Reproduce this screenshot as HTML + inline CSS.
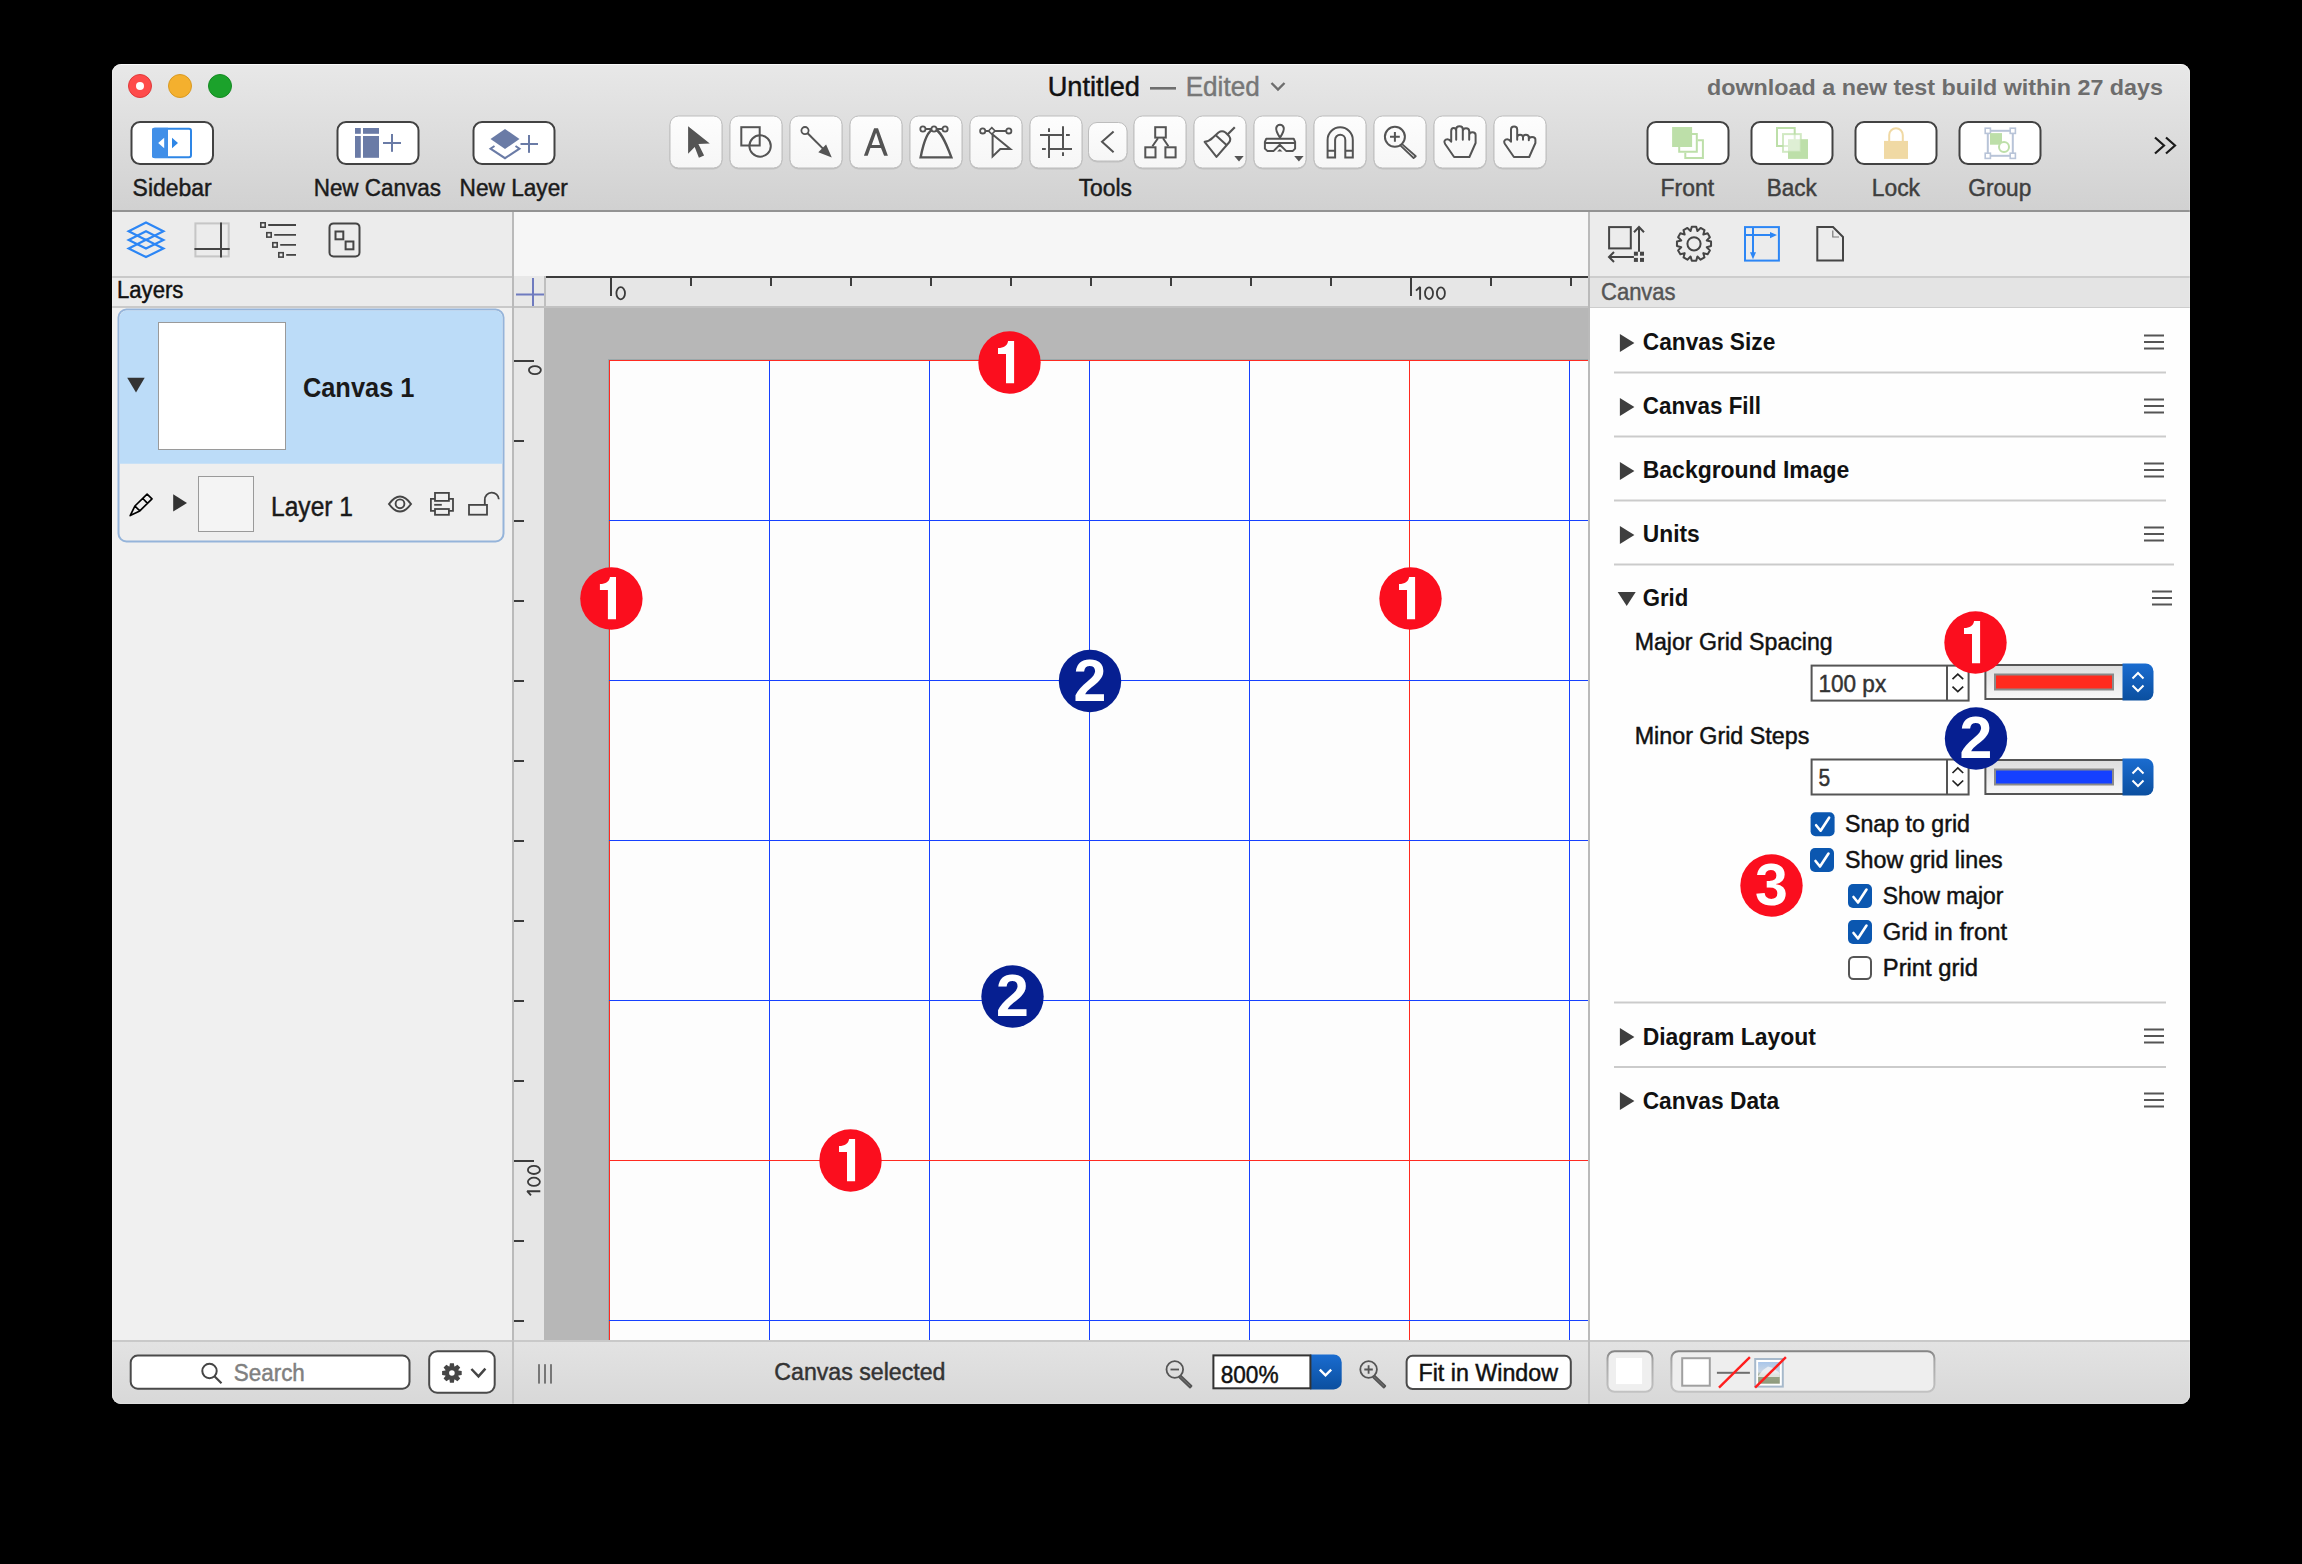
<!DOCTYPE html>
<html><head><meta charset="utf-8"><title>OmniGraffle Grid</title>
<style>html,body{margin:0;padding:0;background:#000;width:2302px;height:1564px;overflow:hidden}</style>
</head><body>
<svg width="2302" height="1564" viewBox="0 0 2302 1564" font-family='"Liberation Sans", sans-serif' style="display:block"><defs>
<linearGradient id="tb" x1="0" y1="0" x2="0" y2="1"><stop offset="0" stop-color="#e8e8e8"/><stop offset="1" stop-color="#d1d1d1"/></linearGradient>
<linearGradient id="bb" x1="0" y1="0" x2="0" y2="1"><stop offset="0" stop-color="#e3e3e3"/><stop offset="1" stop-color="#d8d8d8"/></linearGradient>
<linearGradient id="toolbtn" x1="0" y1="0" x2="0" y2="1"><stop offset="0" stop-color="#fdfdfd"/><stop offset="1" stop-color="#f6f6f6"/></linearGradient>
<linearGradient id="bluebtn" x1="0" y1="0" x2="0" y2="1"><stop offset="0" stop-color="#1a6cd0"/><stop offset="1" stop-color="#0b4f9f"/></linearGradient>
<linearGradient id="well" x1="0" y1="0" x2="0" y2="1"><stop offset="0" stop-color="#dedede"/><stop offset="1" stop-color="#f8f8f8"/></linearGradient>
<clipPath id="wclip"><rect x="112" y="64" width="2078" height="1340" rx="9" ry="9"/></clipPath>
<clipPath id="cclip"><rect x="544" y="308" width="1044" height="1032"/></clipPath>
<linearGradient id="wellStroke" x1="0" y1="0" x2="0" y2="1"><stop offset="0" stop-color="#858585"/><stop offset="0.25" stop-color="#a8a8a8"/><stop offset="1" stop-color="#c2c2c2"/></linearGradient>
<linearGradient id="photo" x1="0" y1="0" x2="0" y2="1"><stop offset="0" stop-color="#a9c6ea"/><stop offset="0.45" stop-color="#c9d6e4"/><stop offset="0.6" stop-color="#9aa58a"/><stop offset="1" stop-color="#8e9a7c"/></linearGradient>
</defs>
<rect x="0" y="0" width="2302" height="1564" fill="#000" />
<g clip-path="url(#wclip)">
<rect x="112" y="64" width="2078" height="1340" fill="#ececec" />
<rect x="112" y="64" width="2078" height="146" fill="url(#tb)" />
<rect x="112" y="210" width="2078" height="2" fill="#939393" />
<circle cx="140" cy="86" r="11.5" fill="#fe4b4b" stroke="#e0393a" stroke-width="1"/>
<circle cx="140" cy="86" r="4" fill="#fff"/>
<circle cx="180" cy="86" r="11.5" fill="#f4b02e" stroke="#d99a22" stroke-width="1"/>
<circle cx="220" cy="86" r="11.5" fill="#1ba22b" stroke="#148a22" stroke-width="1"/>
<text x="1047.7" y="96" font-size="27" font-weight="400" fill="#111" stroke="#111" stroke-width="0.45" textLength="92.3" lengthAdjust="spacingAndGlyphs" >Untitled</text>
<rect x="1150" y="87" width="26" height="2.6" fill="#6e6e6e" />
<text x="1185.7" y="96" font-size="27" font-weight="400" fill="#777" stroke="#777" stroke-width="0.45" textLength="74" lengthAdjust="spacingAndGlyphs" >Edited</text>
<polyline points="1271.5,83 1278,89.5 1284.5,83" fill="none" stroke="#6e6e6e" stroke-width="2.4"/>
<text x="1707" y="95.2" font-size="22" font-weight="700" fill="#6d6d6d" textLength="456" lengthAdjust="spacingAndGlyphs" >download a new test build within 27 days</text>
<rect x="131.5" y="122" width="81.5" height="42" rx="8.5" ry="8.5" fill="#fff" stroke="#424242" stroke-width="2"/>
<rect x="337.5" y="122" width="81.0" height="42" rx="8.5" ry="8.5" fill="#fff" stroke="#424242" stroke-width="2"/>
<rect x="473.5" y="122" width="81.0" height="42" rx="8.5" ry="8.5" fill="#fff" stroke="#424242" stroke-width="2"/>
<rect x="1647.5" y="122" width="81.0" height="42" rx="8.5" ry="8.5" fill="#fff" stroke="#424242" stroke-width="2"/>
<rect x="1751.5" y="122" width="81.0" height="42" rx="8.5" ry="8.5" fill="#fff" stroke="#424242" stroke-width="2"/>
<rect x="1855.5" y="122" width="81.0" height="42" rx="8.5" ry="8.5" fill="#fff" stroke="#424242" stroke-width="2"/>
<rect x="1959.5" y="122" width="81.0" height="42" rx="8.5" ry="8.5" fill="#fff" stroke="#424242" stroke-width="2"/>
<rect x="153" y="128.8" width="38" height="28.4" rx="2" fill="#fff" stroke="#2e86e6" stroke-width="2"/>
<path d="M152,129.8 a2,2 0 0 1 2,-2 h14 v30.2 h-14 a2,2 0 0 1 -2,-2 z" fill="#418fe8"/>
<polygon points="164.2,137.8 164.2,148.2 158.2,143" fill="#fff"/>
<polygon points="172,137.8 172,148.2 178,143" fill="#2e86e6"/>
<rect x="355" y="128" width="5.8" height="5.8" fill="#6a7ba6" />
<rect x="363" y="128" width="16" height="5.8" fill="#6a7ba6" />
<rect x="355" y="136" width="5.8" height="21.8" fill="#6a7ba6" />
<rect x="363" y="136" width="16" height="21.8" fill="#6a7ba6" />
<rect x="383" y="142" width="18" height="2" fill="#6a7ba6" />
<rect x="391" y="134" width="2" height="17.8" fill="#6a7ba6" />
<polygon points="505,129 519.5,139 505,149 490.5,139" fill="#6a7ba6"/>
<polyline points="494.5,146 490.5,148.7 505,158.2 519.5,148.7 515.5,146" fill="none" stroke="#6a7ba6" stroke-width="2"/>
<rect x="520.5" y="143" width="17.5" height="2" fill="#6a7ba6" />
<rect x="528" y="135" width="2" height="17.8" fill="#6a7ba6" />
<text x="132.6" y="196" font-size="23" font-weight="400" fill="#1b1b1b" stroke="#1b1b1b" stroke-width="0.45" textLength="79" lengthAdjust="spacingAndGlyphs" >Sidebar</text>
<text x="313.7" y="196" font-size="23" font-weight="400" fill="#1b1b1b" stroke="#1b1b1b" stroke-width="0.45" textLength="127.2" lengthAdjust="spacingAndGlyphs" >New Canvas</text>
<text x="459.6" y="196" font-size="23" font-weight="400" fill="#1b1b1b" stroke="#1b1b1b" stroke-width="0.45" textLength="108.2" lengthAdjust="spacingAndGlyphs" >New Layer</text>
<text x="1078.7" y="196" font-size="23" font-weight="400" fill="#1b1b1b" stroke="#1b1b1b" stroke-width="0.45" textLength="53.3" lengthAdjust="spacingAndGlyphs" >Tools</text>
<text x="1660.5" y="196" font-size="23" font-weight="400" fill="#3f3f3f" stroke="#3f3f3f" stroke-width="0.45" textLength="53.5" lengthAdjust="spacingAndGlyphs" >Front</text>
<text x="1766.8" y="196" font-size="23" font-weight="400" fill="#3f3f3f" stroke="#3f3f3f" stroke-width="0.45" textLength="50" lengthAdjust="spacingAndGlyphs" >Back</text>
<text x="1871.8" y="196" font-size="23" font-weight="400" fill="#3f3f3f" stroke="#3f3f3f" stroke-width="0.45" textLength="48.2" lengthAdjust="spacingAndGlyphs" >Lock</text>
<text x="1968.3" y="196" font-size="23" font-weight="400" fill="#3f3f3f" stroke="#3f3f3f" stroke-width="0.45" textLength="63" lengthAdjust="spacingAndGlyphs" >Group</text>
<polyline points="2155,137.5 2164,145.5 2155,153.5" fill="none" stroke="#1b1b1b" stroke-width="2.2"/>
<polyline points="2166,137.5 2175,145.5 2166,153.5" fill="none" stroke="#1b1b1b" stroke-width="2.2"/>
<rect x="1672.1" y="127" width="20" height="20" fill="#bddfa9" />
<path d="M1692,134.1 h4.8 v17.7 h-17.6 v-4.8" fill="none" stroke="#bddfa9" stroke-width="2"/>
<path d="M1697.8,140.2 h5.1 v17.7 h-17.6 v-5.1" fill="none" stroke="#bddfa9" stroke-width="2"/>
<rect x="1788" y="139.2" width="20" height="19.7" fill="#bddfa9"/>
<rect x="1777" y="128" width="17.7" height="18" fill="none" stroke="#bddfa9" stroke-width="2"/>
<rect x="1783" y="134.1" width="17.8" height="17.7" fill="#fff" fill-opacity="0.5" stroke="#bddfa9" stroke-opacity="0.7" stroke-width="2"/>
<rect x="1884" y="140.9" width="24" height="18" fill="#f0d9a4"/>
<path d="M1889.2,141 v-6 a6.8,6.8 0 0 1 13.6,0 v6" fill="none" stroke="#f0d9a4" stroke-width="2"/>
<rect x="1987.8" y="130.8" width="25" height="25" fill="none" stroke="#b8c4d8" stroke-width="2"/>
<rect x="1985.2" y="128.20000000000002" width="5.2" height="5.2" fill="#fff" stroke="#b8c4d8" stroke-width="1.6"/>
<rect x="2010.2" y="128.20000000000002" width="5.2" height="5.2" fill="#fff" stroke="#b8c4d8" stroke-width="1.6"/>
<rect x="1985.2" y="153.20000000000002" width="5.2" height="5.2" fill="#fff" stroke="#b8c4d8" stroke-width="1.6"/>
<rect x="2010.2" y="153.20000000000002" width="5.2" height="5.2" fill="#fff" stroke="#b8c4d8" stroke-width="1.6"/>
<rect x="1990" y="133.1" width="12" height="11.6" fill="#bddfa9" />
<circle cx="2004" cy="147" r="5" fill="#fff" stroke="#bddfa9" stroke-width="2"/>
<rect x="669.5" y="116.5" width="53.0" height="53.0" rx="9" ry="9" fill="#b5b5b5" opacity="0.6"/>
<rect x="670.0" y="116.0" width="52.0" height="52.0" rx="8.5" ry="8.5" fill="url(#toolbtn)" stroke="#bdbdbd" stroke-width="1"/>
<rect x="729.5" y="116.5" width="53.0" height="53.0" rx="9" ry="9" fill="#b5b5b5" opacity="0.6"/>
<rect x="730.0" y="116.0" width="52.0" height="52.0" rx="8.5" ry="8.5" fill="url(#toolbtn)" stroke="#bdbdbd" stroke-width="1"/>
<rect x="789.5" y="116.5" width="53.0" height="53.0" rx="9" ry="9" fill="#b5b5b5" opacity="0.6"/>
<rect x="790.0" y="116.0" width="52.0" height="52.0" rx="8.5" ry="8.5" fill="url(#toolbtn)" stroke="#bdbdbd" stroke-width="1"/>
<rect x="849.5" y="116.5" width="53.0" height="53.0" rx="9" ry="9" fill="#b5b5b5" opacity="0.6"/>
<rect x="850.0" y="116.0" width="52.0" height="52.0" rx="8.5" ry="8.5" fill="url(#toolbtn)" stroke="#bdbdbd" stroke-width="1"/>
<rect x="909.5" y="116.5" width="53.0" height="53.0" rx="9" ry="9" fill="#b5b5b5" opacity="0.6"/>
<rect x="910.0" y="116.0" width="52.0" height="52.0" rx="8.5" ry="8.5" fill="url(#toolbtn)" stroke="#bdbdbd" stroke-width="1"/>
<rect x="969.5" y="116.5" width="53.0" height="53.0" rx="9" ry="9" fill="#b5b5b5" opacity="0.6"/>
<rect x="970.0" y="116.0" width="52.0" height="52.0" rx="8.5" ry="8.5" fill="url(#toolbtn)" stroke="#bdbdbd" stroke-width="1"/>
<rect x="1029.5" y="116.5" width="53.0" height="53.0" rx="9" ry="9" fill="#b5b5b5" opacity="0.6"/>
<rect x="1030.0" y="116.0" width="52.0" height="52.0" rx="8.5" ry="8.5" fill="url(#toolbtn)" stroke="#bdbdbd" stroke-width="1"/>
<rect x="1133.5" y="116.5" width="53.0" height="53.0" rx="9" ry="9" fill="#b5b5b5" opacity="0.6"/>
<rect x="1134.0" y="116.0" width="52.0" height="52.0" rx="8.5" ry="8.5" fill="url(#toolbtn)" stroke="#bdbdbd" stroke-width="1"/>
<rect x="1193.5" y="116.5" width="53.0" height="53.0" rx="9" ry="9" fill="#b5b5b5" opacity="0.6"/>
<rect x="1194.0" y="116.0" width="52.0" height="52.0" rx="8.5" ry="8.5" fill="url(#toolbtn)" stroke="#bdbdbd" stroke-width="1"/>
<rect x="1253.5" y="116.5" width="53.0" height="53.0" rx="9" ry="9" fill="#b5b5b5" opacity="0.6"/>
<rect x="1254.0" y="116.0" width="52.0" height="52.0" rx="8.5" ry="8.5" fill="url(#toolbtn)" stroke="#bdbdbd" stroke-width="1"/>
<rect x="1313.5" y="116.5" width="53.0" height="53.0" rx="9" ry="9" fill="#b5b5b5" opacity="0.6"/>
<rect x="1314.0" y="116.0" width="52.0" height="52.0" rx="8.5" ry="8.5" fill="url(#toolbtn)" stroke="#bdbdbd" stroke-width="1"/>
<rect x="1373.5" y="116.5" width="53.0" height="53.0" rx="9" ry="9" fill="#b5b5b5" opacity="0.6"/>
<rect x="1374.0" y="116.0" width="52.0" height="52.0" rx="8.5" ry="8.5" fill="url(#toolbtn)" stroke="#bdbdbd" stroke-width="1"/>
<rect x="1433.5" y="116.5" width="53.0" height="53.0" rx="9" ry="9" fill="#b5b5b5" opacity="0.6"/>
<rect x="1434.0" y="116.0" width="52.0" height="52.0" rx="8.5" ry="8.5" fill="url(#toolbtn)" stroke="#bdbdbd" stroke-width="1"/>
<rect x="1493.5" y="116.5" width="53.0" height="53.0" rx="9" ry="9" fill="#b5b5b5" opacity="0.6"/>
<rect x="1494.0" y="116.0" width="52.0" height="52.0" rx="8.5" ry="8.5" fill="url(#toolbtn)" stroke="#bdbdbd" stroke-width="1"/>
<rect x="1088" y="123" width="39.5" height="39.5" rx="9" ry="9" fill="#b5b5b5" opacity="0.6"/>
<rect x="1088.5" y="122.5" width="38.5" height="38.5" rx="8.5" ry="8.5" fill="url(#toolbtn)" stroke="#bdbdbd" stroke-width="1"/>
<polygon points="688.1,126.2 709.8,143.6 698.4,143.9 704.1,155.4 698.9,157.8 694.7,147 688.1,153.8" fill="#545454"/>
<rect x="741.3" y="127.2" width="18.4" height="18.3" fill="none" stroke="#545454" stroke-width="2"/>
<circle cx="760.1" cy="146" r="10.7" fill="none" stroke="#545454" stroke-width="2"/>
<circle cx="805" cy="130.6" r="3.6" fill="none" stroke="#545454" stroke-width="1.8"/>
<line x1="807.6" y1="133.2" x2="824" y2="149.6" stroke="#545454" stroke-width="2"/>
<polygon points="831.8,157.4 818.3,152.2 826.1,144.4" fill="#545454"/>
<path d="M863.9,155.8 L874.1,128.2 H878 L887.9,155.8 H884.1 L881,147.9 H870.4 L867.7,155.8 Z M871.7,144.9 H880 L876.1,132.7 Z" fill="#545454" fill-rule="evenodd"/>
<path d="M920.6,157.4 C924,140 928,130 934,129 C940,130 945,140 951.4,157.4 Z" fill="none" stroke="#545454" stroke-width="2.4"/>
<line x1="922.9" y1="129" x2="945.1" y2="129" stroke="#545454" stroke-width="2"/>
<circle cx="922.9" cy="129" r="2.6" fill="#fafafa" stroke="#545454" stroke-width="1.8"/>
<circle cx="934" cy="129" r="2.6" fill="#fafafa" stroke="#545454" stroke-width="1.8"/>
<circle cx="945.1" cy="129" r="2.6" fill="#fafafa" stroke="#545454" stroke-width="1.8"/>
<line x1="982.7" y1="130.9" x2="1008.8" y2="130.9" stroke="#545454" stroke-width="2"/>
<circle cx="982.7" cy="130.9" r="2.6" fill="#fafafa" stroke="#545454" stroke-width="1.8"/>
<circle cx="1008.8" cy="130.9" r="2.6" fill="#fafafa" stroke="#545454" stroke-width="1.8"/>
<polygon points="991.8,127.6 995.1,130.9 991.8,134.2 988.5,130.9" fill="#fafafa" stroke="#545454" stroke-width="1.6"/>
<polygon points="992.6,134.5 1010.3,149.1 1000.3,149.1 992.6,156.4" fill="none" stroke="#545454" stroke-width="2" stroke-linejoin="miter"/>
<path d="M1040,135 h23 M1063,126.2 v23 M1049,149.1 h23 M1049,135 v23 M1049,128.2 v3.7 M1066,135 h3.8 M1042,149.1 h3.8 M1063,152.2 v3.7" fill="none" stroke="#545454" stroke-width="2"/>
<polyline points="1113.6,131.4 1102,141.8 1113.6,152.2" fill="none" stroke="#545454" stroke-width="2"/>
<rect x="1155.2" y="127.2" width="10.6" height="10.4" fill="none" stroke="#545454" stroke-width="2"/>
<rect x="1145.3" y="147.3" width="10.2" height="10.1" fill="none" stroke="#545454" stroke-width="2"/>
<rect x="1165.4" y="147.3" width="10.2" height="10.1" fill="none" stroke="#545454" stroke-width="2"/>
<path d="M1158,138.2 L1152.4,146.3 M1163,138.2 L1168.4,146.3" fill="none" stroke="#545454" stroke-width="2"/>
<path d="M1234.8,127.2 L1227.5,134.5" stroke="#545454" stroke-width="2.2"/>
<path d="M1204.6,141.8 Q1209,141.5 1213,137.5 L1218.5,132.5 Q1222,130 1225.5,132.5 L1229,136 Q1231.5,139.5 1229,142.5 L1216.5,156.9 Z M1215.5,135 L1226.5,145" fill="none" stroke="#545454" stroke-width="2" stroke-linejoin="round"/>
<polygon points="1234.3,155.9 1243.7,155.9 1239,161.6" fill="#545454"/>
<path d="M1280,137.6 C1276.5,132.5 1275.8,129.5 1276.3,127.6 C1277,125.3 1278.5,124.8 1280,124.8 C1281.5,124.8 1283,125.3 1283.7,127.6 C1284.2,129.5 1283.5,132.5 1280,137.6 Z" fill="none" stroke="#545454" stroke-width="2"/>
<path d="M1266.3,138.7 L1264.9,141.8 V148.6 L1267.3,150.9 H1273.7 L1279.8,144.8 L1286.1,150.9 H1292.9 L1295.1,148.6 V141.8 L1293.7,138.7 Z M1264.9,143 H1295.1" fill="none" stroke="#545454" stroke-width="2" stroke-linejoin="round"/>
<polygon points="1277.1,151.6 1282.5,151.6 1279.8,149" fill="#545454"/>
<polygon points="1294.2,155.9 1303.6,155.9 1298.9,161.6" fill="#545454"/>
<path d="M1327.6,157.4 v-17.5 a12.6,12.6 0 0 1 25.2,0 v17.5 h-7.5 v-17.5 a5.1,5.1 0 0 0 -10.2,0 v17.5 z M1327.6,150.8 h7.5 M1345.3,150.8 h7.5" fill="none" stroke="#545454" stroke-width="2"/>
<circle cx="1394.9" cy="136.8" r="10" fill="none" stroke="#545454" stroke-width="2"/>
<path d="M1390,136.8 h9.8 M1394.9,131.9 v9.8" stroke="#545454" stroke-width="2"/>
<path d="M1401.5,143.6 L1415.8,156.2 L1413.6,158 L1400,145.2" fill="none" stroke="#545454" stroke-width="1.8" stroke-linejoin="round"/>
<path d="M1454.1,157 L1445.3,144.3 Q1443.3,141 1445.8,139.6 Q1448.8,138.3 1451.2,141.8 V131 Q1451.2,128 1453.7,128 Q1456.2,128 1456.2,131 V139.7 V129.2 Q1456.2,126.3 1459.5,126.3 Q1462.8,126.3 1462.8,129.2 V139.7 V131 Q1462.8,128.2 1466,128.2 Q1469.2,128.2 1469.2,131 V139.7 V135 Q1469.2,132.3 1472.4,132.3 Q1475.6,132.3 1475.6,135 V143 L1469.4,157 Z" fill="none" stroke="#545454" stroke-width="2" stroke-linejoin="round"/>
<path d="M1513.9,157 L1505.1,144.3 Q1503.1,141 1505.6,139.6 Q1508.6,138.3 1511,141.8 V129.5 Q1511,126.4 1514.1,126.4 Q1517.2,126.4 1517.2,129.5 V139.7 V137.3 Q1517.2,134.8 1520.1,134.8 Q1523,134.8 1523,137.3 V139.7 V137.3 Q1523,134.8 1525.9,134.8 Q1528.8,134.8 1528.8,137.3 V140.2 V139.6 Q1528.8,137.1 1532.1,137.1 Q1535.4,137.1 1535.4,139.6 V143 L1529.2,157 Z" fill="none" stroke="#545454" stroke-width="2" stroke-linejoin="round"/>
<rect x="112" y="212" width="400" height="64" fill="#ececec" />
<rect x="112" y="276" width="400" height="2" fill="#c9c9c9" />
<rect x="112" y="278" width="400" height="28" fill="#ebebeb" />
<rect x="112" y="306" width="400" height="2" fill="#c9c9c9" />
<rect x="112" y="308" width="400" height="1032" fill="#f0f0f0" />
<rect x="512" y="212" width="2" height="1192" fill="#bababa" />
<polygon points="146,222.60000000000002 163.4,231.3 146,240.0 128.7,231.3" fill="none" stroke="#2c86f5" stroke-width="2.2"/>
<polygon points="146,231.20000000000002 163.4,239.9 146,248.6 128.7,239.9" fill="none" stroke="#2c86f5" stroke-width="2.2"/>
<polygon points="146,239.70000000000002 163.4,248.4 146,257.1 128.7,248.4" fill="none" stroke="#2c86f5" stroke-width="2.2"/>
<rect x="195.4" y="223.4" width="33.3" height="33" fill="none" stroke="#c6c6c6" stroke-width="2"/>
<path d="M221,222.4 v35 M194.4,248.9 h35.3" stroke="#454545" stroke-width="2"/>
<rect x="260.8" y="222.8" width="4.4" height="4.4" fill="none" stroke="#454545" stroke-width="1.6"/>
<line x1="268.2" y1="225" x2="296" y2="225" stroke="#454545" stroke-width="1.8"/>
<rect x="266.8" y="232.70000000000002" width="4.4" height="4.4" fill="none" stroke="#454545" stroke-width="1.6"/>
<line x1="274.2" y1="234.9" x2="296" y2="234.9" stroke="#454545" stroke-width="1.8"/>
<rect x="272.8" y="242.70000000000002" width="4.4" height="4.4" fill="none" stroke="#454545" stroke-width="1.6"/>
<line x1="280.2" y1="244.9" x2="296" y2="244.9" stroke="#454545" stroke-width="1.8"/>
<rect x="278.8" y="252.70000000000002" width="4.4" height="4.4" fill="none" stroke="#454545" stroke-width="1.6"/>
<line x1="286.2" y1="254.9" x2="296" y2="254.9" stroke="#454545" stroke-width="1.8"/>
<rect x="329.5" y="223.4" width="30" height="33" rx="4" fill="none" stroke="#454545" stroke-width="2"/>
<rect x="335.5" y="231.5" width="7.8" height="7.8" fill="none" stroke="#454545" stroke-width="2"/>
<rect x="345.6" y="241.5" width="7.8" height="7.8" fill="none" stroke="#454545" stroke-width="2"/>
<text x="117" y="297.6" font-size="23" font-weight="400" fill="#111" stroke="#111" stroke-width="0.45" textLength="66.4" lengthAdjust="spacingAndGlyphs" >Layers</text>
<rect x="118.5" y="309.5" width="385" height="232" rx="8" ry="8" fill="#efefef" stroke="#95b4da" stroke-width="2"/>
<path d="M119.5,463.8 V318 a7.5,7.5 0 0 1 7.5,-7.5 h368 a7.5,7.5 0 0 1 7.5,7.5 V463.8 Z" fill="#bcdcf8"/>
<polygon points="127.2,377.8 144.7,377.8 136,392.6" fill="#333"/>
<rect x="158.5" y="322.5" width="127" height="127" fill="#fff" stroke="#9a9a9a" stroke-width="1"/>
<text x="302.9" y="397" font-size="27.5" font-weight="700" fill="#1a1a1a" textLength="111.6" lengthAdjust="spacingAndGlyphs" >Canvas 1</text>
<path d="M130.2,515.6 L134.9,506 L147.1,494.1 L152,498.8 L139.8,510.9 Z M134.9,506 L139.8,510.9 M142.8,498.5 L147.3,503.2" fill="none" stroke="#000" stroke-width="1.7" stroke-linejoin="round"/>
<polygon points="173.2,494.2 187,502.9 173.2,511.6" fill="#333"/>
<rect x="198.5" y="476.5" width="55" height="55" fill="#f4f4f4" stroke="#9a9a9a" stroke-width="1"/>
<text x="271" y="515.5" font-size="27" font-weight="400" fill="#1a1a1a" stroke="#1a1a1a" stroke-width="0.45" textLength="82" lengthAdjust="spacingAndGlyphs" >Layer 1</text>
<path d="M389,504 Q400,489 411,504 Q400,519 389,504 Z" fill="none" stroke="#454545" stroke-width="2"/>
<circle cx="400" cy="503.8" r="4.4" fill="none" stroke="#454545" stroke-width="1.9"/>
<rect x="435" y="492.9" width="13.9" height="8" fill="none" stroke="#454545" stroke-width="1.8"/>
<path d="M435,510.8 h-4.1 v-12 h4.1 M448.9,498.8 h4.1 v12 h-4.1" fill="none" stroke="#454545" stroke-width="1.8"/>
<rect x="435" y="509" width="13.9" height="5.8" fill="none" stroke="#454545" stroke-width="1.8"/>
<line x1="434.2" y1="504.8" x2="441.8" y2="504.8" stroke="#454545" stroke-width="1.8"/>
<rect x="469" y="504.9" width="18" height="9.8" fill="none" stroke="#454545" stroke-width="1.8"/>
<path d="M484.8,504.9 v-5 a7,7 0 0 1 14,-0.6" fill="none" stroke="#454545" stroke-width="1.8"/>
<rect x="514" y="212" width="1074" height="64" fill="#f6f6f6" />
<rect x="514" y="276" width="30" height="30" fill="#e8e8e8" />
<rect x="544" y="276" width="2" height="30" fill="#bfbfbf" />
<rect x="546" y="276" width="1042" height="30" fill="#e6e6e6" />
<rect x="546" y="276" width="1042" height="2" fill="#3c3c3c" />
<rect x="514" y="306" width="1074" height="2" fill="#c2c2c2" />
<rect x="514" y="308" width="30" height="1032" fill="#e6e6e6" />
<path d="M516,294.6 h28 M533,278 v28" stroke="#6f7bbf" stroke-width="2"/>
<rect x="610" y="278" width="2" height="18" fill="#3c3c3c" />
<rect x="690" y="278" width="2" height="8" fill="#3c3c3c" />
<rect x="770" y="278" width="2" height="8" fill="#3c3c3c" />
<rect x="850" y="278" width="2" height="8" fill="#3c3c3c" />
<rect x="930" y="278" width="2" height="8" fill="#3c3c3c" />
<rect x="1010" y="278" width="2" height="8" fill="#3c3c3c" />
<rect x="1090" y="278" width="2" height="8" fill="#3c3c3c" />
<rect x="1170" y="278" width="2" height="8" fill="#3c3c3c" />
<rect x="1250" y="278" width="2" height="8" fill="#3c3c3c" />
<rect x="1330" y="278" width="2" height="8" fill="#3c3c3c" />
<rect x="1410" y="278" width="2" height="18" fill="#3c3c3c" />
<rect x="1490" y="278" width="2" height="8" fill="#3c3c3c" />
<rect x="1570" y="278" width="2" height="8" fill="#3c3c3c" />
<ellipse cx="620.7" cy="293.25" rx="4.3" ry="6.05" fill="none" stroke="#3a3a3a" stroke-width="1.8"/>
<path d="M1420.1,299.7 V287 L1416,290.6" fill="none" stroke="#3a3a3a" stroke-width="1.9" stroke-linejoin="bevel"/>
<ellipse cx="1429" cy="293.2" rx="4.0" ry="5.85" fill="none" stroke="#3a3a3a" stroke-width="1.8"/>
<ellipse cx="1440.9" cy="293.2" rx="4.0" ry="5.85" fill="none" stroke="#3a3a3a" stroke-width="1.8"/>
<rect x="514" y="360" width="20" height="2" fill="#3c3c3c" />
<rect x="514" y="440" width="10" height="2" fill="#3c3c3c" />
<rect x="514" y="520" width="10" height="2" fill="#3c3c3c" />
<rect x="514" y="600" width="10" height="2" fill="#3c3c3c" />
<rect x="514" y="680" width="10" height="2" fill="#3c3c3c" />
<rect x="514" y="760" width="10" height="2" fill="#3c3c3c" />
<rect x="514" y="840" width="10" height="2" fill="#3c3c3c" />
<rect x="514" y="920" width="10" height="2" fill="#3c3c3c" />
<rect x="514" y="1000" width="10" height="2" fill="#3c3c3c" />
<rect x="514" y="1080" width="10" height="2" fill="#3c3c3c" />
<rect x="514" y="1160" width="20" height="2" fill="#3c3c3c" />
<rect x="514" y="1240" width="10" height="2" fill="#3c3c3c" />
<rect x="514" y="1320" width="10" height="2" fill="#3c3c3c" />
<ellipse cx="534.9" cy="370.1" rx="6.0" ry="4.0" fill="none" stroke="#3a3a3a" stroke-width="1.8"/>
<path d="M540.3,1191.2 H527.2 L531,1195.3" fill="none" stroke="#3a3a3a" stroke-width="1.9" stroke-linejoin="bevel"/>
<ellipse cx="533.9" cy="1181.8" rx="6.0" ry="4.1" fill="none" stroke="#3a3a3a" stroke-width="1.8"/>
<ellipse cx="533.9" cy="1169.9" rx="6.0" ry="4.1" fill="none" stroke="#3a3a3a" stroke-width="1.8"/>
<g clip-path="url(#cclip)">
<rect x="544" y="308" width="1044" height="1032" fill="#b7b7b7" />
<rect x="608" y="359" width="1000" height="1000" fill="#9aa8aa" />
<rect x="609" y="360" width="1000" height="1000" fill="#fdfdfd" />
<rect x="769" y="360" width="1" height="1000" fill="#1540ff" />
<rect x="929" y="360" width="1" height="1000" fill="#1540ff" />
<rect x="1089" y="360" width="1" height="1000" fill="#1540ff" />
<rect x="1249" y="360" width="1" height="1000" fill="#1540ff" />
<rect x="1569" y="360" width="1" height="1000" fill="#1540ff" />
<rect x="609" y="360" width="1" height="1000" fill="#ff2a20" />
<rect x="1409" y="360" width="1" height="1000" fill="#ff2a20" />
<rect x="609" y="520" width="1000" height="1" fill="#1540ff" />
<rect x="609" y="680" width="1000" height="1" fill="#1540ff" />
<rect x="609" y="840" width="1000" height="1" fill="#1540ff" />
<rect x="609" y="1000" width="1000" height="1" fill="#1540ff" />
<rect x="609" y="1320" width="1000" height="1" fill="#1540ff" />
<rect x="609" y="360" width="1000" height="1" fill="#ff2a20" />
<rect x="609" y="1160" width="1000" height="1" fill="#ff2a20" />
</g>
<rect x="1588" y="212" width="2" height="1192" fill="#bababa" />
<rect x="1590" y="212" width="600" height="64" fill="#ececec" />
<rect x="1590" y="276" width="600" height="2" fill="#cdcdcd" />
<rect x="1590" y="278" width="600" height="29" fill="#e4e4e4" />
<rect x="1590" y="307" width="600" height="1.5" fill="#cdcdcd" />
<rect x="1590" y="308" width="600" height="1032" fill="#fefefe" />
<rect x="1609.1" y="227.1" width="21.7" height="21.3" fill="none" stroke="#454545" stroke-width="2"/>
<path d="M1639,251.7 V227.5 M1634,232.2 L1639,227 L1644,232.2 M1633.9,256.9 H1608.5 M1614,252 L1609,257 L1614,262" fill="none" stroke="#454545" stroke-width="2"/>
<rect x="1633.9" y="251.7" width="4" height="4" fill="#454545" />
<rect x="1640" y="251.7" width="4" height="4" fill="#454545" />
<rect x="1633.9" y="257.9" width="4" height="4" fill="#454545" />
<rect x="1640" y="257.9" width="4" height="4" fill="#454545" />
<polygon points="1711.05,241.57 1711.05,246.03 1706.76,247.19 1706.74,247.24 1709.88,250.40 1707.66,254.26 1703.35,253.12 1703.32,253.15 1704.46,257.46 1700.60,259.68 1697.44,256.54 1697.39,256.56 1696.23,260.85 1691.77,260.85 1690.61,256.56 1690.56,256.54 1687.40,259.68 1683.54,257.46 1684.68,253.15 1684.65,253.12 1680.34,254.26 1678.12,250.40 1681.26,247.24 1681.24,247.19 1676.95,246.03 1676.95,241.57 1681.24,240.41 1681.26,240.36 1678.12,237.20 1680.34,233.34 1684.65,234.48 1684.68,234.45 1683.54,230.14 1687.40,227.92 1690.56,231.06 1690.61,231.04 1691.77,226.75 1696.23,226.75 1697.39,231.04 1697.44,231.06 1700.60,227.92 1704.46,230.14 1703.32,234.45 1703.35,234.48 1707.66,233.34 1709.88,237.20 1706.74,240.36 1706.76,240.41" fill="none" stroke="#454545" stroke-width="2" stroke-linejoin="round"/>
<circle cx="1694" cy="243.8" r="6.6" fill="none" stroke="#454545" stroke-width="2"/>
<rect x="1745" y="227.1" width="33.9" height="33.5" fill="none" stroke="#2c86f5" stroke-width="2"/>
<path d="M1753,228 V253 M1746,235.1 H1771" stroke="#2c86f5" stroke-width="2"/>
<polygon points="1750,252.3 1756,252.3 1753,259.2" fill="#2c86f5"/>
<polygon points="1770,232 1770,238.2 1777,235.1" fill="#2c86f5"/>
<path d="M1817.3,227.1 H1833 L1843,237 V260.6 H1817.3 Z" fill="none" stroke="#454545" stroke-width="2"/>
<path d="M1832.8,230.5 V237 H1839" fill="none" stroke="#777" stroke-width="1.2"/>
<text x="1601" y="299.7" font-size="23" font-weight="400" fill="#555" stroke="#555" stroke-width="0.45" textLength="74.6" lengthAdjust="spacingAndGlyphs" >Canvas</text>
<polygon points="1619.9,334 1634.4,343 1619.9,352" fill="#3e3e3e"/>
<text x="1642.8" y="350" font-size="23.5" font-weight="700" fill="#111" textLength="132.5" lengthAdjust="spacingAndGlyphs" >Canvas Size</text>
<rect x="2144" y="334.5" width="20" height="2" fill="#555" />
<rect x="2144" y="341" width="20" height="2" fill="#555" />
<rect x="2144" y="347.5" width="20" height="2" fill="#555" />
<polygon points="1619.9,398 1634.4,407 1619.9,416" fill="#3e3e3e"/>
<text x="1642.8" y="414" font-size="23.5" font-weight="700" fill="#111" textLength="118.2" lengthAdjust="spacingAndGlyphs" >Canvas Fill</text>
<rect x="2144" y="398.5" width="20" height="2" fill="#555" />
<rect x="2144" y="405" width="20" height="2" fill="#555" />
<rect x="2144" y="411.5" width="20" height="2" fill="#555" />
<polygon points="1619.9,462 1634.4,471 1619.9,480" fill="#3e3e3e"/>
<text x="1642.8" y="478" font-size="23.5" font-weight="700" fill="#111" textLength="206.5" lengthAdjust="spacingAndGlyphs" >Background Image</text>
<rect x="2144" y="462.5" width="20" height="2" fill="#555" />
<rect x="2144" y="469" width="20" height="2" fill="#555" />
<rect x="2144" y="475.5" width="20" height="2" fill="#555" />
<polygon points="1619.9,526 1634.4,535 1619.9,544" fill="#3e3e3e"/>
<text x="1642.8" y="542" font-size="23.5" font-weight="700" fill="#111" textLength="57" lengthAdjust="spacingAndGlyphs" >Units</text>
<rect x="2144" y="526.5" width="20" height="2" fill="#555" />
<rect x="2144" y="533" width="20" height="2" fill="#555" />
<rect x="2144" y="539.5" width="20" height="2" fill="#555" />
<rect x="1614" y="371.5" width="552" height="2" fill="#cbcbcb" />
<rect x="1614" y="435.5" width="552" height="2" fill="#cbcbcb" />
<rect x="1614" y="499.5" width="552" height="2" fill="#cbcbcb" />
<rect x="1614" y="563.5" width="560" height="2" fill="#cbcbcb" />
<polygon points="1617.7,592 1635.7,592 1626.7,606" fill="#3e3e3e"/>
<text x="1642.8" y="606" font-size="23.5" font-weight="700" fill="#111" textLength="45.5" lengthAdjust="spacingAndGlyphs" >Grid</text>
<rect x="2152" y="590.5" width="20" height="2" fill="#555" />
<rect x="2152" y="597" width="20" height="2" fill="#555" />
<rect x="2152" y="603.5" width="20" height="2" fill="#555" />
<text x="1634.7" y="650" font-size="23" font-weight="400" fill="#111" stroke="#111" stroke-width="0.45" textLength="198" lengthAdjust="spacingAndGlyphs" >Major Grid Spacing</text>
<text x="1634.7" y="743.9" font-size="23" font-weight="400" fill="#111" stroke="#111" stroke-width="0.45" textLength="174.6" lengthAdjust="spacingAndGlyphs" >Minor Grid Steps</text>
<rect x="1811.6" y="665.6" width="157" height="35.0" fill="#fff" stroke="#555" stroke-width="2"/>
<rect x="1946" y="665.6" width="2" height="35.0" fill="#555" />
<polyline points="1952.5,679.1 1957.8,674.1 1963.2,679.1" fill="none" stroke="#222" stroke-width="1.7"/>
<polyline points="1952.5,686.6 1957.8,691.6 1963.2,686.6" fill="none" stroke="#222" stroke-width="1.7"/>
<text x="1818.4" y="691.6" font-size="23" font-weight="400" fill="#333" stroke="#333" stroke-width="0.45" textLength="67.8" lengthAdjust="spacingAndGlyphs" >100 px</text>
<rect x="1811.6" y="759.5" width="157" height="35.0" fill="#fff" stroke="#555" stroke-width="2"/>
<rect x="1946" y="759.5" width="2" height="35.0" fill="#555" />
<polyline points="1952.5,773.0 1957.8,768.0 1963.2,773.0" fill="none" stroke="#222" stroke-width="1.7"/>
<polyline points="1952.5,780.5 1957.8,785.5 1963.2,780.5" fill="none" stroke="#222" stroke-width="1.7"/>
<text x="1818.4" y="785.5" font-size="23" font-weight="400" fill="#333" stroke="#333" stroke-width="0.45" textLength="11.7" lengthAdjust="spacingAndGlyphs" >5</text>
<rect x="1985.4" y="665" width="140" height="34" fill="url(#well)" stroke="#555" stroke-width="2"/>
<rect x="1995" y="674.5" width="118" height="15" fill="#ff2a1e" stroke="#8a8a8a" stroke-width="2"/>
<path d="M2122.5,663.5 h23 a8,8 0 0 1 8,8 v21 a8,8 0 0 1 -8,8 h-23 z" fill="url(#bluebtn)"/>
<polyline points="2132.5,678.5 2138,673.0 2143.5,678.5" fill="none" stroke="#fff" stroke-width="2"/>
<polyline points="2132.5,685.5 2138,691.0 2143.5,685.5" fill="none" stroke="#fff" stroke-width="2"/>
<rect x="1985.4" y="760" width="140" height="34" fill="url(#well)" stroke="#555" stroke-width="2"/>
<rect x="1995" y="769.5" width="118" height="15" fill="#1540ff" stroke="#8a8a8a" stroke-width="2"/>
<path d="M2122.5,758.5 h23 a8,8 0 0 1 8,8 v21 a8,8 0 0 1 -8,8 h-23 z" fill="url(#bluebtn)"/>
<polyline points="2132.5,773.5 2138,768.0 2143.5,773.5" fill="none" stroke="#fff" stroke-width="2"/>
<polyline points="2132.5,780.5 2138,786.0 2143.5,780.5" fill="none" stroke="#fff" stroke-width="2"/>
<rect x="1810.6" y="812.2" width="24" height="24" rx="5" fill="#0b57b0"/>
<polyline points="1816.1,825.2 1820.6,830.7 1829.1,817.7" fill="none" stroke="#fff" stroke-width="2.6" stroke-linecap="round" stroke-linejoin="round"/>
<text x="1845" y="832" font-size="23" font-weight="400" fill="#111" stroke="#111" stroke-width="0.45" textLength="125" lengthAdjust="spacingAndGlyphs" >Snap to grid</text>
<rect x="1810" y="848" width="24" height="24" rx="5" fill="#0b57b0"/>
<polyline points="1815.5,861 1820,866.5 1828.5,853.5" fill="none" stroke="#fff" stroke-width="2.6" stroke-linecap="round" stroke-linejoin="round"/>
<text x="1845" y="868" font-size="23" font-weight="400" fill="#111" stroke="#111" stroke-width="0.45" textLength="157.7" lengthAdjust="spacingAndGlyphs" >Show grid lines</text>
<rect x="1848" y="884" width="24" height="24" rx="5" fill="#0b57b0"/>
<polyline points="1853.5,897 1858,902.5 1866.5,889.5" fill="none" stroke="#fff" stroke-width="2.6" stroke-linecap="round" stroke-linejoin="round"/>
<text x="1882.8" y="903.6" font-size="23" font-weight="400" fill="#111" stroke="#111" stroke-width="0.45" textLength="120.6" lengthAdjust="spacingAndGlyphs" >Show major</text>
<rect x="1848" y="920" width="24" height="24" rx="5" fill="#0b57b0"/>
<polyline points="1853.5,933 1858,938.5 1866.5,925.5" fill="none" stroke="#fff" stroke-width="2.6" stroke-linecap="round" stroke-linejoin="round"/>
<text x="1882.8" y="940" font-size="23" font-weight="400" fill="#111" stroke="#111" stroke-width="0.45" textLength="124.2" lengthAdjust="spacingAndGlyphs" >Grid in front</text>
<rect x="1849" y="957" width="22" height="22" rx="4.5" fill="#fff" stroke="#555" stroke-width="2"/>
<text x="1882.8" y="975.8" font-size="23" font-weight="400" fill="#111" stroke="#111" stroke-width="0.45" textLength="95.2" lengthAdjust="spacingAndGlyphs" >Print grid</text>
<rect x="1614" y="1001.5" width="552" height="2" fill="#cbcbcb" />
<polygon points="1619.9,1028 1634.4,1037 1619.9,1046" fill="#3e3e3e"/>
<text x="1642.7" y="1045" font-size="23.5" font-weight="700" fill="#111" textLength="173.2" lengthAdjust="spacingAndGlyphs" >Diagram Layout</text>
<rect x="2144" y="1028.5" width="20" height="2" fill="#555" />
<rect x="2144" y="1035" width="20" height="2" fill="#555" />
<rect x="2144" y="1041.5" width="20" height="2" fill="#555" />
<rect x="1614" y="1066" width="552" height="2" fill="#cbcbcb" />
<polygon points="1619.9,1092 1634.4,1101 1619.9,1110" fill="#3e3e3e"/>
<text x="1642.7" y="1108.8" font-size="23.5" font-weight="700" fill="#111" textLength="136.6" lengthAdjust="spacingAndGlyphs" >Canvas Data</text>
<rect x="2144" y="1092.5" width="20" height="2" fill="#555" />
<rect x="2144" y="1099" width="20" height="2" fill="#555" />
<rect x="2144" y="1105.5" width="20" height="2" fill="#555" />
<rect x="112" y="1340" width="2078" height="64" fill="url(#bb)" />
<rect x="112" y="1340" width="400" height="2" fill="#c9c9c9" />
<rect x="514" y="1340" width="1074" height="2" fill="#c9c9c9" />
<rect x="1590" y="1340" width="600" height="2" fill="#c9c9c9" />
<rect x="512" y="1340" width="2" height="64" fill="#c0c0c0" />
<rect x="1588" y="1340" width="2" height="64" fill="#c0c0c0" />
<rect x="130.7" y="1355.6" width="278.8" height="33.1" rx="7" fill="#fff" stroke="#4a4a4a" stroke-width="2"/>
<circle cx="209.5" cy="1371" r="7.2" fill="none" stroke="#454545" stroke-width="2"/>
<line x1="214.5" y1="1376.3" x2="221.5" y2="1383.3" stroke="#454545" stroke-width="2.2"/>
<text x="233.8" y="1380.8" font-size="23" font-weight="400" fill="#808080" stroke="#808080" stroke-width="0.45" textLength="71" lengthAdjust="spacingAndGlyphs" >Search</text>
<rect x="429.2" y="1351.2" width="65.5" height="41.5" rx="8" fill="#fff" stroke="#4a4a4a" stroke-width="2"/>
<polygon points="461.70,1371.01 461.70,1374.99 458.45,1375.47 458.28,1375.89 460.23,1378.53 457.43,1381.33 454.79,1379.38 454.37,1379.55 453.89,1382.80 449.91,1382.80 449.43,1379.55 449.01,1379.38 446.37,1381.33 443.57,1378.53 445.52,1375.89 445.35,1375.47 442.10,1374.99 442.10,1371.01 445.35,1370.53 445.52,1370.11 443.57,1367.47 446.37,1364.67 449.01,1366.62 449.43,1366.45 449.91,1363.20 453.89,1363.20 454.37,1366.45 454.79,1366.62 457.43,1364.67 460.23,1367.47 458.28,1370.11 458.45,1370.53" fill="#454545"/>
<circle cx="451.9" cy="1373" r="2.8" fill="#fff"/>
<polyline points="471.4,1369 478.5,1376.3 485.4,1368.7" fill="none" stroke="#454545" stroke-width="2.5"/>
<rect x="538" y="1364.2" width="2" height="19.4" fill="#777" />
<rect x="544" y="1364.2" width="2" height="19.4" fill="#777" />
<rect x="550" y="1364.2" width="2" height="19.4" fill="#777" />
<text x="774.3" y="1380" font-size="23" font-weight="400" fill="#333" stroke="#333" stroke-width="0.45" textLength="171.2" lengthAdjust="spacingAndGlyphs" >Canvas selected</text>
<circle cx="1174.8" cy="1369.5" r="8.3" fill="none" stroke="#555" stroke-width="1.8"/>
<line x1="1170.5" y1="1369.5" x2="1179" y2="1369.5" stroke="#555" stroke-width="1.8"/>
<path d="M1180.5,1375.5 L1191.5,1386 L1190,1387.5 L1179,1377" fill="none" stroke="#555" stroke-width="1.8" stroke-linejoin="round"/>
<circle cx="1368.6" cy="1369.5" r="8.3" fill="none" stroke="#555" stroke-width="1.8"/>
<path d="M1364.3,1369.5 H1372.8 M1368.6,1365.2 V1373.8" stroke="#555" stroke-width="1.8"/>
<path d="M1374.3,1375.5 L1385.3,1386 L1383.8,1387.5 L1372.8,1377" fill="none" stroke="#555" stroke-width="1.8" stroke-linejoin="round"/>
<path d="M1333.7,1354.4 a8,8 0 0 1 8,8 v19 a8,8 0 0 1 -8,8 H1310 V1354.4 Z" fill="url(#bluebtn)"/>
<rect x="1213.4" y="1355.4" width="97" height="32.9" fill="#fff" stroke="#333" stroke-width="2"/>
<polyline points="1319.8,1369.6 1325.5,1375.3 1331.2,1369.6" fill="none" stroke="#fff" stroke-width="2.4"/>
<text x="1220.7" y="1383" font-size="23" font-weight="400" fill="#111" stroke="#111" stroke-width="0.45" textLength="57.9" lengthAdjust="spacingAndGlyphs" >800%</text>
<rect x="1406.6" y="1355.7" width="164.2" height="33.3" rx="6" fill="#fff" stroke="#4a4a4a" stroke-width="2"/>
<text x="1418.5" y="1381" font-size="23" font-weight="400" fill="#111" stroke="#111" stroke-width="0.45" textLength="139.5" lengthAdjust="spacingAndGlyphs" >Fit in Window</text>
<rect x="1607.5" y="1351.2" width="45" height="40.6" rx="7" fill="#efefef" stroke="url(#wellStroke)" stroke-width="2"/>
<rect x="1616" y="1358" width="26.1" height="26.1" fill="#fff" />
<rect x="1671.4" y="1351.2" width="263" height="40.6" rx="7" fill="#eeeeee" stroke="url(#wellStroke)" stroke-width="2"/>
<rect x="1682.2" y="1358.2" width="27.6" height="27.5" fill="#fff" stroke="#a0a0a0" stroke-width="2"/>
<rect x="1716.9" y="1371.8" width="33" height="2" fill="#6e6e6e" />
<line x1="1719" y1="1387.6" x2="1749.9" y2="1357.2" stroke="#ff1e1e" stroke-width="2.4"/>
<rect x="1755.2" y="1359" width="27.6" height="27.6" fill="#fff" stroke="#a7b9cb" stroke-width="2"/>
<rect x="1758.1" y="1362" width="21.7" height="21.7" fill="url(#photo)"/>
<path d="M1758.1,1376 L1763,1370 L1768,1366.5 L1773,1368 L1779.8,1373 V1377 H1758.1 Z" fill="#f2f4f6" fill-opacity="0.8"/>
<line x1="1755.1" y1="1387.6" x2="1785.9" y2="1357.2" stroke="#ff1e1e" stroke-width="2.4"/>
<circle cx="1009.5" cy="362.5" r="31.2" fill="#fb0e1e"/>
<path d="M1014.1,341.1 V383.2 H1006.0 V354.0 H998.0 V348.1 C1004.0,348.1 1007.2,346.0 1008.1,341.1 Z" fill="#fff"/>
<circle cx="611.4" cy="598.5" r="31.2" fill="#fb0e1e"/>
<path d="M616.0,577.1 V619.2 H607.9 V590.0 H599.9 V584.1 C605.9,584.1 609.1,582.0 610.0,577.1 Z" fill="#fff"/>
<circle cx="1410.5" cy="598.5" r="31.2" fill="#fb0e1e"/>
<path d="M1415.1,577.1 V619.2 H1407.0 V590.0 H1399.0 V584.1 C1405.0,584.1 1408.2,582.0 1409.1,577.1 Z" fill="#fff"/>
<circle cx="1090" cy="681" r="31.2" fill="#061f91"/>
<text x="1090" y="700.8" font-size="59" font-weight="700" fill="#fff" text-anchor="middle">2</text>
<circle cx="1012.5" cy="996.5" r="31.2" fill="#061f91"/>
<text x="1012.5" y="1016.3" font-size="59" font-weight="700" fill="#fff" text-anchor="middle">2</text>
<circle cx="850.5" cy="1160.5" r="31.2" fill="#fb0e1e"/>
<path d="M855.1,1139.1 V1181.2 H847.0 V1152.0 H839.0 V1146.1 C845.0,1146.1 848.2,1144.0 849.1,1139.1 Z" fill="#fff"/>
<circle cx="1975.5" cy="642.5" r="31.2" fill="#fb0e1e"/>
<path d="M1980.1,621.1 V663.2 H1972.0 V634.0 H1964.0 V628.1 C1970.0,628.1 1973.2,626.0 1974.1,621.1 Z" fill="#fff"/>
<circle cx="1976" cy="738.5" r="31.2" fill="#061f91"/>
<text x="1976" y="758.3" font-size="59" font-weight="700" fill="#fff" text-anchor="middle">2</text>
<circle cx="1771.5" cy="885.5" r="31.2" fill="#fb0e1e"/>
<text x="1771.5" y="905.3" font-size="59" font-weight="700" fill="#fff" text-anchor="middle">3</text>
</g>
<rect x="121" y="64" width="2060" height="1" fill="#fff" fill-opacity="0.7"/>
<rect x="112.5" y="64.5" width="2077" height="1339" rx="9" ry="9" fill="none" stroke="#ffffff" stroke-opacity="0.2" stroke-width="1"/></svg>
</body></html>
